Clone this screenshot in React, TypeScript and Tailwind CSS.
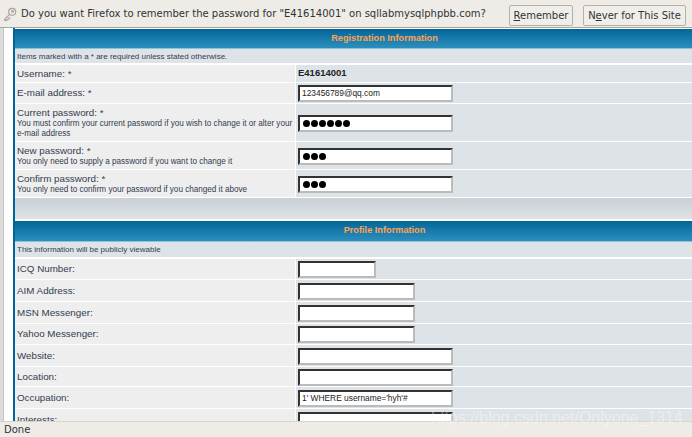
import React from "react";

const Pw = ({ n }: { n: number }) => (
    <div className="flex items-center gap-[1px] pl-[1px]">
        {Array.from({ length: n }).map((_, i) => (
            <span key={i} className="w-[7px] h-[7px] rounded-full bg-black" />
        ))}
    </div>
);

const Field = ({ w = "w-[155px]", h = "h-[17px]", children }: { w?: string; h?: string; children?: React.ReactNode }) => (
    <div className={`${w} ${h} mt-[1px] bg-white border-2 border-t-[#333] border-l-[#333] border-r-[#bbb] border-b-[#bbb] flex items-center pl-[2px] text-[8.4px] leading-none text-[#222] overflow-hidden whitespace-nowrap`}>
        {children}
    </div>
);

const Row = ({ h, label, note, children }: { h: string; label: string; note?: string; children?: React.ReactNode }) => (
    <div className={`${h} flex border-b border-white shrink-0`}>
        <div className="w-[281px] bg-[#eeeeee] pl-[2px] pr-0 flex flex-col justify-center border-r border-white">
            <div className="text-[9.8px] leading-[12px] text-[#323d4f]">{label}</div>
            {note && <div className="text-[8.15px] leading-[10px] text-[#323d4f]">{note}</div>}
        </div>
        <div className="flex-1 bg-[#dee3e7] pl-[2px] flex items-center">{children}</div>
    </div>
);

const Header = ({ h, title }: { h: string; title: string }) => (
    <div className={`${h} shrink-0 bg-gradient-to-b from-[#006699] to-[#2a8fbf] border-b border-[#8fc1db] flex items-center justify-center text-[9.2px] font-bold text-[#ffa34f]`}>
        {title}
    </div>
);

const Hint = ({ h, text }: { h: string; text: string }) => (
    <div className={`${h} shrink-0 bg-[#dee3e7] border-b-2 border-white pl-[2px] pt-[1px] flex items-center text-[8px] text-[#323d4f]`}>{text}</div>
);

export default function App() {
    return (
        <div className="relative w-[692px] h-[437px] overflow-hidden flex flex-col bg-white font-['Liberation_Sans',sans-serif]">
            <div className="h-[28px] shrink-0 bg-[#efebe6] border-b border-[#a8a49c] flex items-center pl-[3px] pr-[6px] font-['DejaVu_Sans',sans-serif] text-[10px] text-[#2e3436]">
                <svg width="14" height="14" viewBox="0 0 16 16" className="shrink-0 mr-[4px]" fill="none" stroke="#aaa69e" strokeWidth="1.4">
                    <circle cx="10.5" cy="5.5" r="4" />
                    <circle cx="11" cy="5" r="1" />
                    <path d="M7.5 8.5 2 14v1.200h2.500L5 14h1.500l.5-1.500h1.500" />
                </svg>
                <span className="flex-1 whitespace-nowrap">Do you want Firefox to remember the password for "E41614001" on sqllabmysqlphpbb.com?</span>
                <button className="w-[64px] h-[21px] mt-[3px] mr-[10px] bg-[#f1eee9] border border-[#b5b1a9] rounded-[2px] whitespace-nowrap"><u>R</u>emember</button>
                <button className="w-[103px] h-[21px] mt-[3px] bg-[#f1eee9] border border-[#b5b1a9] rounded-[2px] whitespace-nowrap">N<u>e</u>ver for This Site</button>
            </div>
            <div className="flex-1 min-h-0 flex overflow-hidden">
                <div className="w-[4px] bg-[#dcdcdc] border-r border-[#c4c4c4] shrink-0" />
                <div className="w-[9px] bg-white shrink-0" />
                <div className="w-[2px] bg-[#006699] shrink-0" />
                <div className="w-[739px] shrink-0 flex flex-col pt-[1px]">
                    <Header h="h-[20px]" title="Registration Information" />
                    <Hint h="h-[16px]" text="Items marked with a * are required unless stated otherwise." />
                    <Row h="h-[18px]" label="Username: *">
                        <span className="text-[9.5px] font-bold text-[#222]">E41614001</span>
                    </Row>
                    <Row h="h-[21px]" label="E-mail address: *"><Field>123456789@qq.com</Field></Row>
                    <Row h="h-[38px]" label="Current password: *" note="You must confirm your current password if you wish to change it or alter your e-mail address"><Field><Pw n={6} /></Field></Row>
                    <Row h="h-[28px]" label="New password: *" note="You only need to supply a password if you want to change it"><Field><Pw n={3} /></Field></Row>
                    <Row h="h-[28px]" label="Confirm password: *" note="You only need to confirm your password if you changed it above"><Field><Pw n={3} /></Field></Row>
                    <div className="h-[21px] shrink-0 bg-gradient-to-b from-[#c9d0d6] to-[#dfe3e7]" />
                    <div className="h-[2px] shrink-0 bg-white" />
                    <Header h="h-[21px]" title="Profile Information" />
                    <Hint h="h-[17px]" text="This information will be publicly viewable" />
                    <Row h="h-[21px]" label="ICQ Number:"><Field w="w-[78px]" /></Row>
                    <Row h="h-[22px]" label="AIM Address:"><Field w="w-[117px]" /></Row>
                    <Row h="h-[22px]" label="MSN Messenger:"><Field w="w-[117px]" /></Row>
                    <Row h="h-[21px]" label="Yahoo Messenger:"><Field w="w-[117px]" /></Row>
                    <Row h="h-[22px]" label="Website:"><Field /></Row>
                    <Row h="h-[20px]" label="Location:"><Field /></Row>
                    <Row h="h-[22px]" label="Occupation:"><Field>1' WHERE username='hyh'#</Field></Row>
                    <Row h="h-[22px]" label="Interests:"><Field /></Row>
                </div>
            </div>
            <div className="h-[16px] shrink-0 bg-[#efebe6] border-t border-[#d8d3cb] pl-[4px] flex items-center font-['DejaVu_Sans',sans-serif] text-[10px] text-[#2e3436]">Done</div>
            <div className="absolute right-[9px] bottom-[11px] text-[16px] leading-none text-white/40 whitespace-nowrap">https://blog.csdn.net/Onlyone_1314</div>
        </div>
    );
}
